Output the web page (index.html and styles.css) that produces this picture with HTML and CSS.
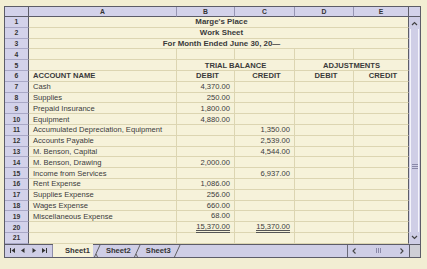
FILE: index.html
```html
<!DOCTYPE html>
<html>
<head>
<meta charset="utf-8">
<link rel="stylesheet" href="styles.css">
</head>
<body>
<div class="window">
  <div class="grid">
    <div class="ch corner"></div>
    <div class="ch">A</div>
    <div class="ch">B</div>
    <div class="ch">C</div>
    <div class="ch">D</div>
    <div class="ch last">E</div>
    <div class="ch sbh"></div>

    <div class="rh">1</div><div class="c title">Marge's Place</div>
    <div class="vs">
      <div class="arrow"><svg width="7" height="5" viewBox="0 0 7 5"><path d="M1 4 L3.5 1.5 L6 4" fill="none" stroke="#444" stroke-width="1.2"/></svg></div>
      <div class="thumb"><div class="grip"><svg width="6" height="5" viewBox="0 0 6 5"><path d="M0 0.5H6M0 2.5H6M0 4.5H6" stroke="#8a89a8" stroke-width="1"/></svg></div></div>
      <div class="arrow"><svg width="7" height="5" viewBox="0 0 7 5"><path d="M1 1 L3.5 3.5 L6 1" fill="none" stroke="#444" stroke-width="1.2"/></svg></div>
    </div>
    <div class="rh">2</div><div class="c title">Work Sheet</div>
    <div class="rh">3</div><div class="c title">For Month Ended June 30, 20—</div>

    <div class="rh">4</div><div class="c"></div><div class="c"></div><div class="c"></div><div class="c"></div><div class="c last"></div>

    <div class="rh">5</div><div class="c"></div><div class="c b ctr span2">TRIAL BALANCE</div><div class="c b ctr span2 last">ADJUSTMENTS</div>

    <div class="rh">6</div><div class="c b">ACCOUNT NAME</div><div class="c b hd">DEBIT</div><div class="c b hd">CREDIT</div><div class="c b hd">DEBIT</div><div class="c b hd last">CREDIT</div>

    <div class="rh">7</div><div class="c">Cash</div><div class="c n">4,370.00</div><div class="c n"></div><div class="c"></div><div class="c last"></div>
    <div class="rh">8</div><div class="c">Supplies</div><div class="c n">250.00</div><div class="c n"></div><div class="c"></div><div class="c last"></div>
    <div class="rh">9</div><div class="c">Prepaid Insurance</div><div class="c n">1,800.00</div><div class="c n"></div><div class="c"></div><div class="c last"></div>
    <div class="rh">10</div><div class="c">Equipment</div><div class="c n">4,880.00</div><div class="c n"></div><div class="c"></div><div class="c last"></div>
    <div class="rh">11</div><div class="c">Accumulated Depreciation, Equipment</div><div class="c n"></div><div class="c n">1,350.00</div><div class="c"></div><div class="c last"></div>
    <div class="rh">12</div><div class="c">Accounts Payable</div><div class="c n"></div><div class="c n">2,539.00</div><div class="c"></div><div class="c last"></div>
    <div class="rh">13</div><div class="c">M. Benson, Capital</div><div class="c n"></div><div class="c n">4,544.00</div><div class="c"></div><div class="c last"></div>
    <div class="rh">14</div><div class="c">M. Benson, Drawing</div><div class="c n">2,000.00</div><div class="c n"></div><div class="c"></div><div class="c last"></div>
    <div class="rh">15</div><div class="c">Income from Services</div><div class="c n"></div><div class="c n">6,937.00</div><div class="c"></div><div class="c last"></div>
    <div class="rh">16</div><div class="c">Rent Expense</div><div class="c n">1,086.00</div><div class="c n"></div><div class="c"></div><div class="c last"></div>
    <div class="rh">17</div><div class="c">Supplies Expense</div><div class="c n">256.00</div><div class="c n"></div><div class="c"></div><div class="c last"></div>
    <div class="rh">18</div><div class="c">Wages Expense</div><div class="c n">660.00</div><div class="c n"></div><div class="c"></div><div class="c last"></div>
    <div class="rh">19</div><div class="c">Miscellaneous Expense</div><div class="c n"><span class="ul">68.00</span></div><div class="c n"><span class="ul"></span></div><div class="c"></div><div class="c last"></div>
    <div class="rh">20</div><div class="c"></div><div class="c n tot"><span class="dbl">15,370.00</span></div><div class="c n tot"><span class="dbl">15,370.00</span></div><div class="c"></div><div class="c last"></div>
    <div class="rh">21</div><div class="c"></div><div class="c"></div><div class="c"></div><div class="c"></div><div class="c last"></div>
  </div>

  <div class="tabbar">
    <div class="nav">
      <svg width="5" height="5" viewBox="0 0 5 5"><path d="M0.5 0V5" stroke="#333" stroke-width="1"/><path d="M5 0L1.5 2.5L5 5Z" fill="#333"/></svg>
      <svg width="4" height="5" viewBox="0 0 4 5"><path d="M3.5 0L0 2.5L3.5 5Z" fill="#333"/></svg>
      <svg width="4" height="5" viewBox="0 0 4 5"><path d="M0.5 0L4 2.5L0.5 5Z" fill="#333"/></svg>
      <svg width="5" height="5" viewBox="0 0 5 5"><path d="M4.5 0V5" stroke="#333" stroke-width="1"/><path d="M0 0L3.5 2.5L0 5Z" fill="#333"/></svg>
    </div>
    <div class="tab active">Sheet1</div>
    <svg class="sep" width="8" height="13" viewBox="0 0 8 13"><path d="M1 13L7 0" stroke="#555" stroke-width="0.9" fill="none"/><path d="M3 9L5 13" stroke="#555" stroke-width="0.9" fill="none"/></svg>
    <div class="tab">Sheet2</div>
    <svg class="sep" width="8" height="13" viewBox="0 0 8 13"><path d="M1 13L7 0" stroke="#555" stroke-width="0.9" fill="none"/><path d="M3 9L5 13" stroke="#555" stroke-width="0.9" fill="none"/></svg>
    <div class="tab">Sheet3</div>
    <svg class="sep" width="8" height="13" viewBox="0 0 8 13"><path d="M1 13L7 0" stroke="#555" stroke-width="0.9" fill="none"/></svg>
    <div class="fill"></div>
    <div class="hs">
      <svg width="4" height="6" viewBox="0 0 4 6"><path d="M3.5 0.5L1 3L3.5 5.5" fill="none" stroke="#444" stroke-width="1.1"/></svg>
      <svg width="5" height="5" viewBox="0 0 5 5"><path d="M0.5 0V5M2.5 0V5M4.5 0V5" stroke="#8a89a8" stroke-width="1"/></svg>
      <svg width="4" height="6" viewBox="0 0 4 6"><path d="M0.5 0.5L3 3L0.5 5.5" fill="none" stroke="#444" stroke-width="1.1"/></svg>
    </div>
    <div class="hcorner"></div>
  </div>
</div>
</body>
</html>
```

FILE: styles.css
```css
* { box-sizing: border-box; margin: 0; padding: 0; }
html, body { background: #f2eed3; }
body {
  margin: 0;
  padding: 6px 0 0 4px;
  font-family: "Liberation Sans", Arial, sans-serif;
  font-size: 7.6px;
  color: #3a3a3a;
}
.window {
  width: 417px;
  border: 1px solid #5c5c68;
  background: #f6f2da;
}
.grid {
  display: grid;
  grid-template-columns: 24px 148px 58px 60px 59px 55px 11px;
  grid-template-rows: 10px repeat(21, 10.8px);
  height: 236.8px;
  overflow: hidden;
}
.ch {
  background: #d3d2ea;
  border-bottom: 1px solid #5c5c68;
  border-right: 1px solid #9796b4;
  font-weight: bold;
  font-size: 6.8px;
  display: flex;
  align-items: center;
  justify-content: center;
  color: #333;
}
.ch.corner { border-right: 1px solid #5c5c68; }
.ch.last { border-right: 1px solid #5c5c68; }
.ch.sbh { border-right: none; background: #d3d2ea; }
.rh {
  grid-column: 1;
  background: #d3d2ea;
  border-right: 1px solid #5c5c68;
  border-bottom: 1px solid #a9a8c6;
  font-weight: bold;
  font-size: 6.8px;
  display: flex;
  align-items: center;
  justify-content: center;
  color: #333;
}
.c {
  border-right: 1px solid #dcd5b2;
  border-bottom: 1px solid #dcd5b2;
  padding: 0 4px;
  display: flex;
  align-items: center;
  white-space: nowrap;
  overflow: hidden;
}
.c.last { border-right: 1px solid #5c5c68; }
.title {
  grid-column: 2 / span 5;
  justify-content: center;
  font-weight: bold;
  font-size: 7.9px;
  padding-left: 10px;
  border-right: 1px solid #5c5c68;
}
.b { font-weight: bold; }
.ctr { justify-content: center; }
.span2 { grid-column: span 2; }
.hd { justify-content: center; padding-left: 8px; }
.n { justify-content: flex-end; }
.ul {
  display: inline-block;
  min-width: 36px;
  text-align: right;
  border-bottom: 1px solid #555;
  line-height: 8px;
  height: 10px;
  margin-bottom: -2px;
}
.tot { align-items: flex-start; overflow: visible; }
.dbl {
  display: inline-block;
  text-align: right;
  border-bottom: 3px double #555;
  line-height: 7px;
  padding-top: 1px;
}
.vs {
  grid-column: 7;
  grid-row: 2 / span 21;
  background: #cfcee6;
  display: flex;
  flex-direction: column;
  align-items: stretch;
}
.arrow {
  height: 12px;
  display: flex;
  align-items: center;
  justify-content: center;
}
.thumb {
  flex: 1;
  margin: 0 1px;
  border-left: 1px solid #f4f4fb;
  border-right: 1px solid #f4f4fb;
  display: flex;
  flex-direction: column;
  align-items: center;
}
.grip { margin-top: 135px; line-height: 0; }
.tabbar {
  display: flex;
  height: 13px;
  border-top: 1px solid #5c5c68;
  background: #cfcee6;
  align-items: stretch;
}
.nav {
  width: 48px;
  display: flex;
  align-items: center;
  justify-content: space-around;
  padding: 0 2px;
  border-right: 1px solid #8f8eab;
}
.tab {
  display: flex;
  align-items: center;
  padding: 0 2px 0 5px;
  font-weight: bold;
  color: #333;
}
.tab.active {
  background: #f6f2da;
  margin-top: -1px;
  padding-left: 12px;
  padding-right: 3px;
}
.sep { display: block; flex: none; }
.fill { flex: 1; }
.hs {
  width: 62px;
  border-left: 1px solid #6a6a78;
  display: flex;
  align-items: center;
  justify-content: space-between;
  padding: 0 5px 0 4px;
}
.hcorner {
  width: 11px;
  background: #cfcfd6;
  border-left: 1px solid #5c5c68;
}
```
